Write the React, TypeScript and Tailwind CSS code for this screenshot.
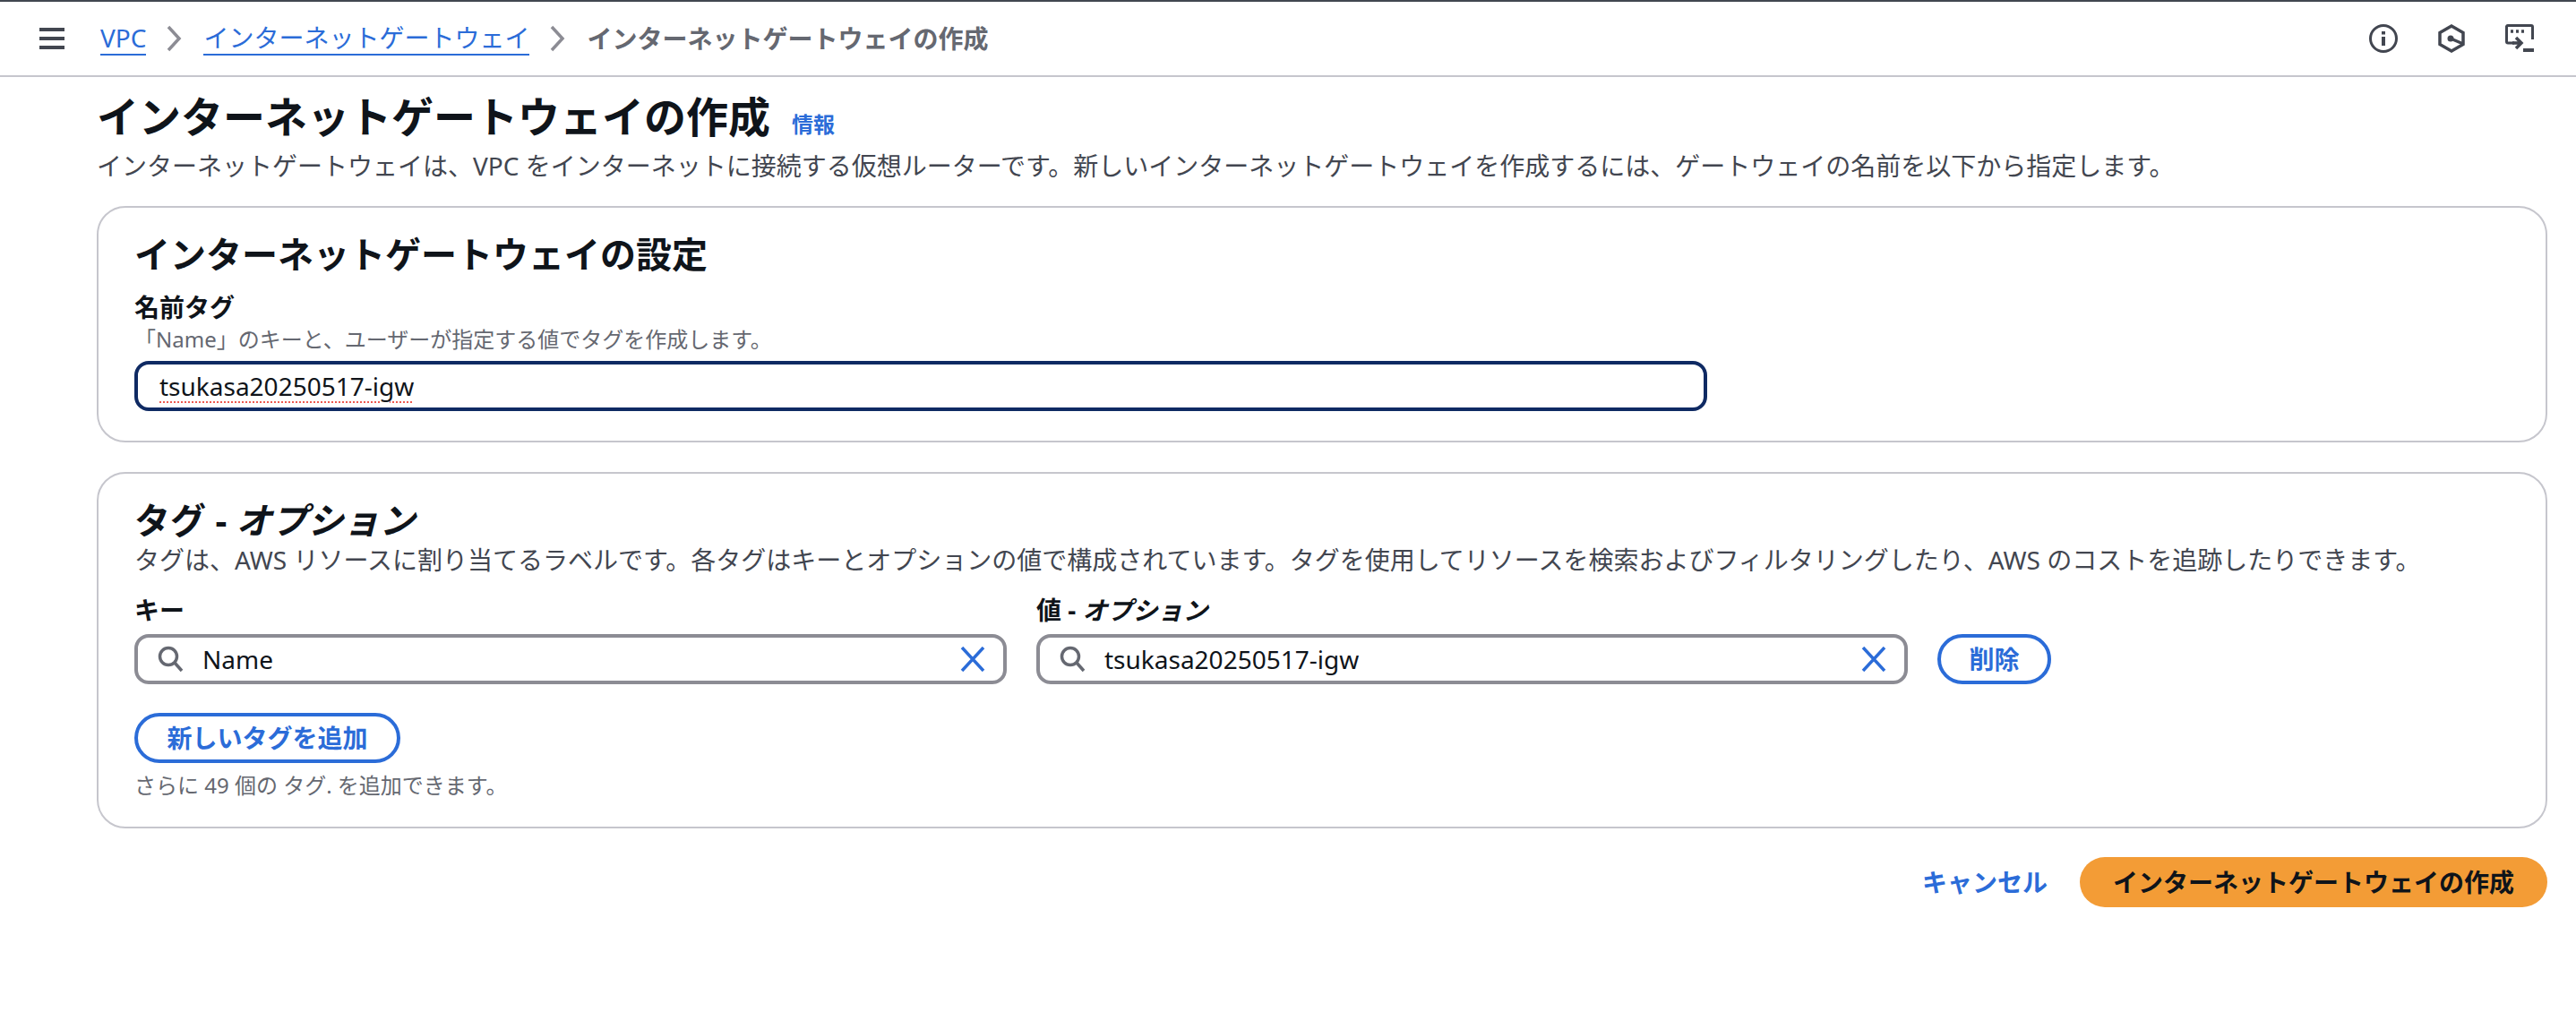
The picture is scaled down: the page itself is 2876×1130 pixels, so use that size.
import React from "react";

const Crumb = () => (
  <svg className="w-[24px] h-[32px] text-[#8c8c94]" viewBox="0 0 24 32" fill="none" stroke="currentColor" strokeWidth="3.5">
    <path d="M5 3l12 13L5 29" />
  </svg>
);

const SearchIcon = () => (
  <svg className="w-[30px] h-[30px] shrink-0 text-[#656871]" viewBox="0 0 30 30" fill="none" stroke="currentColor" strokeWidth="3.5">
    <circle cx="13" cy="12" r="9.5" />
    <path d="M20 19l8 9" />
  </svg>
);

const ClearIcon = () => (
  <svg className="w-[28px] h-[28px] shrink-0 text-[#2b6cd8]" viewBox="0 0 28 28" fill="none" stroke="currentColor" strokeWidth="3.5">
    <path d="M2 1l24 26M26 1L2 27" />
  </svg>
);

interface TagInputProps {
  value: string;
}

const TagInput: React.FC<TagInputProps> = ({ value }) => {
  return (
    <div className="flex items-center h-[56px] w-full rounded-[16px] border-4 border-solid border-[#8c8c94] bg-white pl-[21px] pr-[20px]">
      <SearchIcon />
      <span className="ml-[21px] flex-1 text-[28px] text-[#0f141a]">{value}</span>
      <ClearIcon />
    </div>
  );
};

export default function App() {
  return (
    <div className="w-[2876px] h-[1130px] bg-white overflow-hidden font-['Noto_Sans','Noto_Sans_CJK_JP',sans-serif]">
      <header className="flex items-center justify-between h-[86px] border-t-2 border-b-2 border-solid border-t-[#414750] border-b-[#c6c6cd] pl-[44px] pr-[47px]">
        <div className="flex items-center">
          <svg className="w-[28px] h-[24px] text-[#424650]" viewBox="0 0 28 24" fill="currentColor">
            <rect width="28" height="4" />
            <rect y="10" width="28" height="4" />
            <rect y="20" width="28" height="4" />
          </svg>
          <a className="ml-[40px] text-[28px] leading-[36px] text-[#2b6cd8] border-b-2 border-[#2b6cd8]">VPC</a>
          <div className="mx-[20px]"><Crumb /></div>
          <a className="text-[28px] leading-[36px] text-[#2b6cd8] border-b-2 border-[#2b6cd8]">インターネットゲートウェイ</a>
          <div className="mx-[20px]"><Crumb /></div>
          <span className="text-[28px] leading-[36px] font-bold text-[#656871]">インターネットゲートウェイの作成</span>
        </div>
        <div className="flex items-center gap-[45px] text-[#424650]">
          <svg className="w-[32px] h-[32px]" viewBox="0 0 32 32" fill="none" stroke="currentColor" strokeWidth="3">
            <circle cx="16" cy="16" r="14.5" />
            <path d="M16 14v10" strokeWidth="4" />
            <path d="M16 8v3.5" strokeWidth="4" />
          </svg>
          <svg className="w-[30px] h-[32px]" viewBox="0 0 30 32" fill="none" stroke="currentColor" strokeWidth="3.5">
            <path d="M15 2l13 7.5v13L15 30 2 22.500v-13z" />
            <circle cx="14" cy="16" r="3.500" fill="currentColor" stroke="none" />
            <path d="M14 16l14 6" />
          </svg>
          <svg className="w-[32px] h-[32px]" viewBox="0 0 32 32" fill="none" stroke="currentColor" strokeWidth="3">
            <path d="M10 21H3a1.500 1.500 0 0 1-1.500-1.500v-17A1.500 1.500 0 0 1 3 1.500h26A1.500 1.500 0 0 1 30.500 3v14" />
            <path d="M6 8h3M12 8h3M18 8h3" strokeWidth="3.5" />
            <path d="M8 21h9M12 15l6 6-6 6" strokeWidth="3.5" />
            <path d="M20 29h12" strokeWidth="4" />
          </svg>
        </div>
      </header>

      <main className="pl-[108px] pr-[32px]">
        <div className="flex items-baseline mt-[14px]">
          <h1 className="text-[47px] leading-[60px] font-bold text-[#0f141a]">インターネットゲートウェイの作成</h1>
          <a className="ml-[24px] text-[24px] font-bold text-[#2b6cd8]">情報</a>
        </div>
        <p className="mt-[7px] text-[28px] leading-[36px] text-[#424650]">
          インターネットゲートウェイは、VPC をインターネットに接続する仮想ルーターです。新しいインターネットゲートウェイを作成するには、ゲートウェイの名前を以下から指定します。
        </p>

        <section className="mt-[27px] h-[264px] rounded-[32px] border-2 border-solid border-[#c6c6cd] pl-[40px] pr-[40px] pt-[26px]">
          <h2 className="text-[40px] leading-[52px] font-bold text-[#0f141a]">インターネットゲートウェイの設定</h2>
          <div className="mt-[15px] text-[28px] leading-[36px] font-bold text-[#0f141a]">名前タグ</div>
          <div className="mt-[2px] text-[24px] leading-[32px] text-[#656871]">「Name」のキーと、ユーザーが指定する値でタグを作成します。</div>
          <div className="mt-[8px] flex items-center w-[1756px] h-[56px] rounded-[16px] border-4 border-solid border-[#0f2a63] pl-[24px]">
            <span className="text-[28px] text-[#0f141a] underline decoration-dotted decoration-2 decoration-[#ee5a4f] underline-offset-[6px]">tsukasa20250517-igw</span>
          </div>
        </section>

        <section className="mt-[33px] h-[398px] rounded-[32px] border-2 border-solid border-[#c6c6cd] pl-[40px] pr-[40px] pt-[26px]">
          <h2 className="text-[40px] leading-[52px] font-bold text-[#0f141a]">タグ - <i>オプション</i></h2>
          <p className="text-[28px] leading-[36px] text-[#424650]">
            タグは、AWS リソースに割り当てるラベルです。各タグはキーとオプションの値で構成されています。タグを使用してリソースを検索およびフィルタリングしたり、AWS のコストを追跡したりできます。
          </p>
          <div className="mt-[20px] flex items-end gap-[33px]">
            <div className="w-[974px]">
              <div className="mb-[9px] text-[28px] leading-[36px] font-bold text-[#0f141a]">キー</div>
              <TagInput value="Name" />
            </div>
            <div className="w-[973px]">
              <div className="mb-[9px] text-[28px] leading-[36px] font-bold text-[#0f141a]">値 - <i>オプション</i></div>
              <TagInput value="tsukasa20250517-igw" />
            </div>
            <button className="w-[127px] h-[56px] rounded-full border-4 border-solid border-[#2b6cd8] text-[28px] font-bold text-[#2b6cd8]">削除</button>
          </div>
          <button className="mt-[32px] block w-[297px] h-[56px] rounded-full border-4 border-solid border-[#2b6cd8] text-[28px] font-bold text-[#2b6cd8]">新しいタグを追加</button>
          <div className="mt-[9px] text-[24px] leading-[32px] text-[#656871]">さらに 49 個の タグ. を追加できます。</div>
        </section>

        <div className="mt-[32px] flex items-center justify-end gap-[36px]">
          <a className="text-[28px] font-bold text-[#2b6cd8]">キャンセル</a>
          <button className="w-[522px] h-[56px] rounded-full bg-[#f39c36] text-[28px] font-bold text-[#0f141a]">インターネットゲートウェイの作成</button>
        </div>
      </main>
    </div>
  );
}
